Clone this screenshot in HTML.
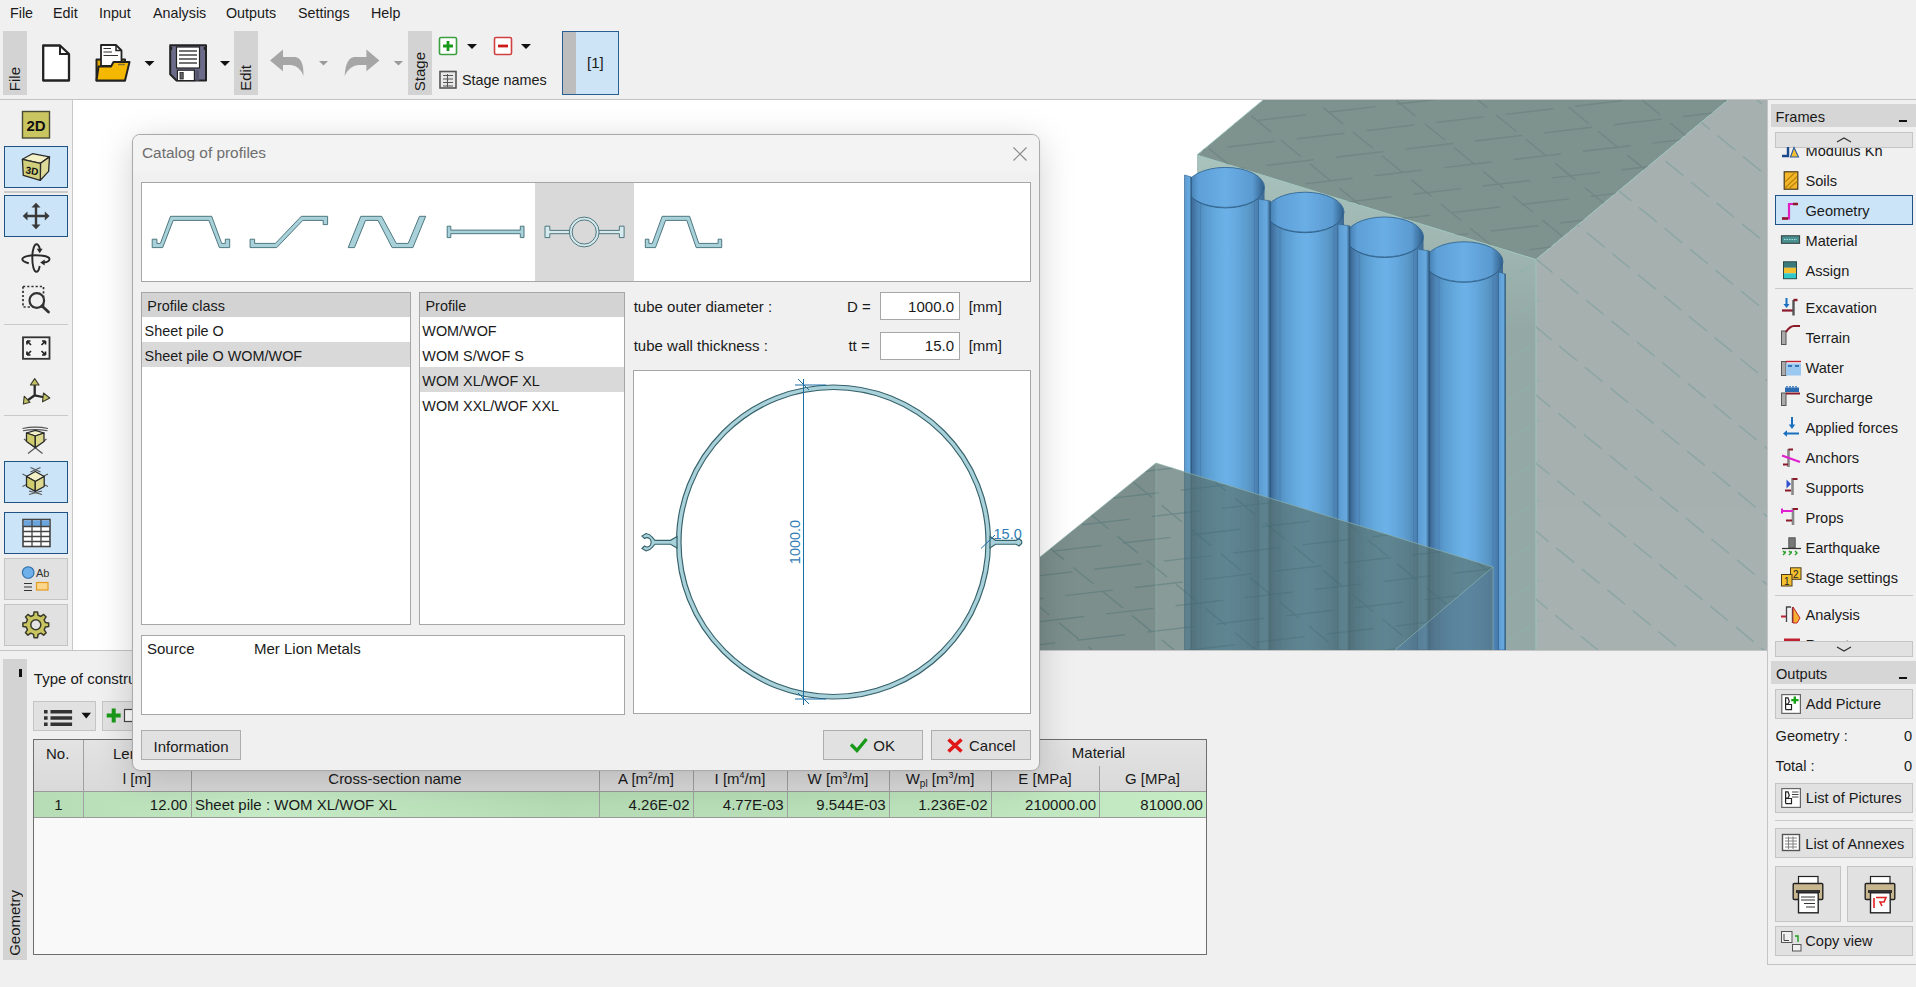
<!DOCTYPE html>
<html><head><meta charset="utf-8">
<style>
html,body{margin:0;padding:0;}
body{width:1916px;height:987px;overflow:hidden;position:relative;background:#f0f0f0;font-family:"Liberation Sans",sans-serif;font-size:15px;color:#1a1a1a;}
.a{position:absolute;}
.t{position:absolute;white-space:nowrap;line-height:15px;margin-top:-0.6px;}
.vl{position:absolute;background:#d3d3d3;}
.vl span{position:absolute;left:4px;bottom:4px;writing-mode:vertical-rl;transform:rotate(180deg);white-space:nowrap;font-size:15px;line-height:16px;color:#1a1a1a;}
.sel{position:absolute;background:#cce4f7;border:1px solid #1f5285;box-sizing:border-box;}
.gbtn{position:absolute;background:#e1e1e1;border:1px solid #c4c4c4;box-sizing:border-box;}
.sep{position:absolute;height:1px;background:#c9c9c9;}
sup{font-size:9px;vertical-align:6px;line-height:0;}
sub{font-size:10px;vertical-align:-3px;line-height:0;}
.arr{position:absolute;width:0;height:0;border-left:5px solid transparent;border-right:5px solid transparent;border-top:5px solid #111;}
</style></head><body>

<!-- MENU -->
<div class="t" style="left:10px;top:6.6px;font-size:14.3px;">File</div>
<div class="t" style="left:53px;top:6.6px;font-size:14.3px;">Edit</div>
<div class="t" style="left:99px;top:6.6px;font-size:14.3px;">Input</div>
<div class="t" style="left:153px;top:6.6px;font-size:14.3px;">Analysis</div>
<div class="t" style="left:226px;top:6.6px;font-size:14.3px;">Outputs</div>
<div class="t" style="left:298px;top:6.6px;font-size:14.3px;">Settings</div>
<div class="t" style="left:371px;top:6.6px;font-size:14.3px;">Help</div>

<!-- TOOLBAR -->

<div class="vl" style="left:3px;top:31px;width:24px;height:64px;"><span>File</span></div>
<div class="vl" style="left:234px;top:31px;width:24px;height:64px;"><span>Edit</span></div>
<div class="vl" style="left:408px;top:31px;width:24px;height:64px;"><span>Stage</span></div>
<svg class="a" style="left:0;top:30px;" width="640" height="68" viewBox="0 30 640 68">
 <!-- new file -->
 <path d="M43.2 45.5 H60 L69 54 V80.5 H43.2 Z" fill="#fff" stroke="#222" stroke-width="2.3" stroke-linejoin="round"/>
 <path d="M60 45.5 V54 H69" fill="none" stroke="#222" stroke-width="2"/>
 <!-- open folder -->
 <path d="M96.5 59.5 H103 V57 H110 V59.5 H125 V80.5 H96.5 Z" fill="#e0a800" stroke="#222" stroke-width="2" stroke-linejoin="round"/>
 <path d="M101 45 H116 L121.5 50.5 V66 H101 Z" fill="#fff" stroke="#222" stroke-width="1.8" stroke-linejoin="round"/>
 <path d="M116 45 V50.5 H121.5" fill="none" stroke="#222" stroke-width="1.5"/>
 <path d="M103.5 48.5 H111 M103.5 52 H112 M103.5 55.5 H118" stroke="#333" stroke-width="1.2"/>
 <path d="M96.5 80.5 L98.5 66.5 H111 L113.5 62 H129.5 L125 80.5 Z" fill="#f5b800" stroke="#222" stroke-width="2" stroke-linejoin="round"/>
 <path d="M118 64.5 H125" stroke="#8a7430" stroke-width="1.5"/>
 <path d="M144.5 61 H154.5 L149.5 66 Z" fill="#111"/>
 <!-- save -->
 <path d="M170.2 45.3 H206 V80.6 H176.5 L170.2 74.3 Z" fill="#6c6c8a" stroke="#222" stroke-width="2" stroke-linejoin="round"/>
 <rect x="176.5" y="47" width="23" height="21" fill="#fff" stroke="#222" stroke-width="1.2"/>
 <path d="M179 51 H197 M179 55 H197 M179 59 H197 M179 63 H197" stroke="#444" stroke-width="1.3"/>
 <rect x="177.4" y="70.2" width="17" height="10.4" fill="#fff" stroke="#222" stroke-width="1.2"/>
 <rect x="180" y="72.5" width="3.2" height="6.5" fill="#666" stroke="#222" stroke-width="0.8"/>
 <rect x="195.5" y="70.2" width="3.6" height="10.4" fill="#55556e"/>
 <path d="M171.5 47 V50 M204.5 47 V50" stroke="#222" stroke-width="1.4"/>
 <path d="M220 61 H230 L225 66 Z" fill="#111"/>
 <!-- undo -->
 <path d="M270 60.5 L283 49.6 V57 H295 Q304 58 303.4 76 Q300 66 291 65 H283 V71.3 Z" fill="#a6a6a6"/>
 <path d="M319 61 H328 L323.5 65.5 Z" fill="#9a9a9a"/>
 <!-- redo -->
 <path d="M379.4 60.5 L366.4 49.6 V57 H354.4 Q345.4 58 344.7 76 Q349 66 358.4 65 H366.4 V71.3 Z" fill="#a6a6a6"/>
 <path d="M393.8 61 H403 L398.4 65.5 Z" fill="#9a9a9a"/>
 <!-- stage add/remove -->
 <rect x="439.5" y="37.5" width="17" height="17" rx="1.5" fill="#fff" stroke="#3aa040" stroke-width="1.6"/>
 <path d="M448 41 V51 M443 46 H453" stroke="#1a9a1a" stroke-width="2.8"/>
 <path d="M467 44 H477 L472 49 Z" fill="#111"/>
 <rect x="494.5" y="37.5" width="17" height="17" rx="1.5" fill="#fff" stroke="#d04040" stroke-width="1.6"/>
 <path d="M498 46 H508" stroke="#cc1a1a" stroke-width="2.8"/>
 <path d="M521 44 H531 L526 49 Z" fill="#111"/>
 <!-- stage names icon -->
 <rect x="440" y="71.5" width="16" height="16.5" fill="#e8e8e8" stroke="#555" stroke-width="1.6"/>
 <path d="M443 75.5 H453 M443 79 H453 M443 82.5 H453 M443 86 H453 M447.5 74 V87" stroke="#555" stroke-width="1.1"/>
</svg>
<div class="t" style="left:462px;top:74px;font-size:14.4px;">Stage names</div>
<div class="a" style="left:562px;top:31px;width:57px;height:64px;background:#cde4f7;border:1px solid #2a5f94;box-sizing:border-box;"></div>
<div class="a" style="left:563px;top:32px;width:13px;height:62px;background:#bdbdbd;"></div>
<div class="t" style="left:587px;top:56px;">[1]</div>

<div class="a" style="left:0;top:99px;width:1916px;height:1px;background:#c4c4c4;"></div>

<!-- LEFT PANEL -->

<div class="sel" style="left:4px;top:146px;width:64px;height:42px;"></div>
<div class="sep" style="left:4px;top:191px;width:64px;height:2px;background:#cbcbcb;"></div>
<div class="sel" style="left:4px;top:195px;width:64px;height:42px;"></div>
<div class="sep" style="left:4px;top:324px;width:64px;"></div>
<div class="sep" style="left:4px;top:415px;width:64px;"></div>
<div class="sel" style="left:4px;top:461px;width:64px;height:42px;"></div>
<div class="sel" style="left:4px;top:512px;width:64px;height:42px;"></div>
<div class="gbtn" style="left:4px;top:558px;width:64px;height:42px;"></div>
<div class="gbtn" style="left:4px;top:604px;width:64px;height:42px;"></div>
<svg class="a" style="left:0;top:100px;" width="72" height="550" viewBox="0 100 72 550">
 <!-- 2D -->
 <rect x="22.5" y="111.5" width="27" height="26.5" fill="#c9c561" stroke="#4b4b35" stroke-width="1.4"/>
 <text x="36" y="131" font-family="Liberation Sans" font-weight="bold" font-size="15" text-anchor="middle" fill="#111">2D</text>
 <!-- 3D cube -->
 <path d="M22.4 159.3 L32.4 153.7 L49.5 156.9 L40.5 163.3 Z" fill="#f5f1c6" stroke="#2a2a2a" stroke-width="1.3" stroke-linejoin="round"/>
 <path d="M40.5 163.3 L49.5 156.9 L48.6 171.4 L40.3 180.3 Z" fill="#dedb98" stroke="#2a2a2a" stroke-width="1.3" stroke-linejoin="round"/>
 <path d="M22.4 159.3 L40.5 163.3 L40.3 180.3 L23.3 175.4 Z" fill="#d2cf7c" stroke="#2a2a2a" stroke-width="1.3" stroke-linejoin="round"/>
 <text x="0" y="0" transform="translate(31.6 174.3) rotate(10) skewX(2)" font-family="Liberation Sans" font-weight="bold" font-size="10" text-anchor="middle" fill="#111">3D</text>
 <!-- move arrows -->
 <g stroke="#3a3a3a" stroke-width="2.4" fill="#3a3a3a">
  <path d="M36 205 V227.5 M25 216 H47.5" fill="none"/>
 </g>
 <path d="M36 202.7 L31.5 207.5 H40.5 Z M36 229.3 L31.5 224.5 H40.5 Z M22.7 216 L27.5 211.5 V220.5 Z M49.6 216 L44.8 211.5 V220.5 Z" fill="#3a3a3a"/>
 <!-- rotate -->
 <path d="M39.7 266 C39 270.5 37.5 271.8 36.3 271.8 C33.8 271.8 32.3 265 32.3 258 C32.3 250 34.3 244.3 36.3 244.3 C38 244.3 39.3 246.5 40 249.5" fill="none" stroke="#2a2a2a" stroke-width="1.9"/>
 <path d="M36.7 248.8 L42.6 248.8 L39.7 253.3 Z" fill="#2a2a2a"/>
 <path d="M28.8 263.2 C24.5 262.2 22.3 260.8 22.3 259.3 C22.3 256.8 28 255.2 35.6 255.2 C44 255.2 49.5 257 49.5 259.3 C49.5 261.4 46.5 262.3 43.5 262.6" fill="none" stroke="#2a2a2a" stroke-width="1.9"/>
 <path d="M40.2 262.6 L44.8 259.5 L44.6 265.4 Z" fill="#2a2a2a"/>
 <!-- zoom -->
 <rect x="23" y="286.5" width="20.5" height="20.5" fill="none" stroke="#333" stroke-width="1.7" stroke-dasharray="2.2 2"/>
 <circle cx="36.8" cy="300.5" r="7.3" fill="#f0f0f0" stroke="#333" stroke-width="2.2"/>
 <path d="M42 306 L48.5 312" stroke="#333" stroke-width="2.8" stroke-linecap="round"/>
 <!-- fit -->
 <rect x="23" y="337.3" width="26.5" height="21.5" fill="#f4f4f4" stroke="#333" stroke-width="1.8"/>
 <path d="M27 341 L31 345 M27 341 V344.5 M27 341 H30.5 M45.5 341 L41.5 345 M45.5 341 V344.5 M45.5 341 H42 M27 355 L31 351 M27 355 V351.5 M27 355 H30.5 M45.5 355 L41.5 351 M45.5 355 V351.5 M45.5 355 H42" stroke="#222" stroke-width="1.7"/>
 <!-- axes -->
 <path d="M34.7 395.3 V383 M34.7 395.3 L26 401.5 M34.7 395.3 L45 397.5" stroke="#2a2a2a" stroke-width="2.3"/>
 <path d="M34.7 378.6 L30.4 385 H39 Z" fill="#c5c368" stroke="#3a3a2a" stroke-width="1.1" stroke-linejoin="round"/>
 <path d="M23.4 404 L24.2 396.2 L30 402.3 Z" fill="#c5c368" stroke="#3a3a2a" stroke-width="1.1" stroke-linejoin="round"/>
 <path d="M49.8 398 L43.5 393 L42.5 401.8 Z" fill="#c5c368" stroke="#3a3a2a" stroke-width="1.1" stroke-linejoin="round"/>
 <!-- view top -->
 <path d="M22.5 428.5 Q35.3 425.8 48 428.5 M23 430.8 Q35.3 428.5 47.5 430.8" stroke="#555" stroke-width="1.1" fill="none"/>
 <path d="M24 439 L42.5 453.5 M46.5 439 L28 453.5" stroke="#555" stroke-width="1.2" fill="none"/>
 <path d="M26.5 433 L35.3 430.3 L44 433 L35.3 436 Z" fill="#f3f0c8" stroke="#2a2a2a" stroke-width="1.3" stroke-linejoin="round"/>
 <path d="M26.5 433 L35.3 436 V447.5 L26.5 441.5 Z" fill="#cfcc6e" stroke="#2a2a2a" stroke-width="1.3" stroke-linejoin="round"/>
 <path d="M44 433 L35.3 436 V447.5 L44 441.5 Z" fill="#dcd98f" stroke="#2a2a2a" stroke-width="1.3" stroke-linejoin="round"/>
 <!-- view iso (selected) -->
 <path d="M22.5 474 L48 486.5 M48 474 L22.5 486.5 M30.5 467.5 L40.5 472 M40.5 467.5 L30.5 472 M29 491 L42 494.5 M42 491 L29 494.5" stroke="#555" stroke-width="1.1" fill="none"/>
 <path d="M26.5 476.5 L35.3 471.5 L44.2 476.5 L35.3 481.5 Z" fill="#f3f0c8" stroke="#2a2a2a" stroke-width="1.3" stroke-linejoin="round"/>
 <path d="M26.5 476.5 L35.3 481.5 V491.4 L26.5 486.5 Z" fill="#cfcc6e" stroke="#2a2a2a" stroke-width="1.3" stroke-linejoin="round"/>
 <path d="M44.2 476.5 L35.3 481.5 V491.4 L44.2 486.5 Z" fill="#dcd98f" stroke="#2a2a2a" stroke-width="1.3" stroke-linejoin="round"/>
 <!-- table -->
 <rect x="23" y="519.5" width="27" height="27" fill="#fff" stroke="#444" stroke-width="1.6"/>
 <rect x="23.8" y="520.3" width="25.4" height="6" fill="#6aa6dd"/>
 <path d="M23 526.5 H50 M23 531.5 H50 M23 536.5 H50 M23 541.5 H50 M32 519.5 V546.5 M41 519.5 V546.5" stroke="#444" stroke-width="1.3"/>
 <!-- Ab -->
 <circle cx="28.2" cy="572.5" r="5.8" fill="#6db0ea" stroke="#2a6aa5" stroke-width="1.1"/>
 <text x="36" y="577" font-family="Liberation Sans" font-size="11" fill="#333">Ab</text>
 <path d="M24 583.5 H32 M24 587 H32 M24 590.5 H32" stroke="#333" stroke-width="1.2"/>
 <rect x="36.5" y="582.5" width="11.5" height="7.5" fill="#fcd68a" stroke="#e39a20" stroke-width="1.2"/>
 <!-- gear -->
 <path d="M45.33 622.51 L48.68 623.07 L48.68 626.53 L45.33 627.09 L44.16 629.92 L46.13 632.69 L43.69 635.13 L40.92 633.16 L38.09 634.33 L37.53 637.68 L34.07 637.68 L33.51 634.33 L30.68 633.16 L27.91 635.13 L25.47 632.69 L27.44 629.92 L26.27 627.09 L22.92 626.53 L22.92 623.07 L26.27 622.51 L27.44 619.68 L25.47 616.91 L27.91 614.47 L30.68 616.44 L33.51 615.27 L34.07 611.92 L37.53 611.92 L38.09 615.27 L40.92 616.44 L43.69 614.47 L46.13 616.91 L44.16 619.68 Z" fill="#c9c561" stroke="#3a3a2a" stroke-width="1.5" stroke-linejoin="round"/>
 <circle cx="35.8" cy="624.8" r="5" fill="#e3e3e3" stroke="#3a3a2a" stroke-width="1.5"/>
</svg>


<!-- 3D VIEW -->
<div class="a" style="left:73px;top:100px;width:1694px;height:550px;background:#fff;overflow:hidden;" id="view3d"></div>

<svg class="a" style="left:73px;top:100px;" width="1694" height="550" viewBox="73 100 1694 550">
 <defs>
  <linearGradient id="pg" x1="0" x2="1" y1="0" y2="0">
   <stop offset="0" stop-color="#284c6c"/><stop offset="0.04" stop-color="#30597e"/><stop offset="0.08" stop-color="#416f9c"/>
   <stop offset="0.14" stop-color="#4e86b8"/><stop offset="0.25" stop-color="#5a9ccf"/><stop offset="0.40" stop-color="#66ace0"/>
   <stop offset="0.52" stop-color="#6cb1e8"/><stop offset="0.65" stop-color="#64a8de"/><stop offset="0.80" stop-color="#5a98c8"/>
   <stop offset="0.88" stop-color="#4f87b8"/><stop offset="0.94" stop-color="#4677a6"/><stop offset="1" stop-color="#3d6890"/>
  </linearGradient>
  <linearGradient id="pin" x1="0" x2="1" y1="0" y2="0">
   <stop offset="0" stop-color="#3a6e9e"/><stop offset="0.15" stop-color="#5d9fd6"/><stop offset="0.5" stop-color="#6aaee6"/>
   <stop offset="0.85" stop-color="#5a9ad0"/><stop offset="1" stop-color="#2f5d88"/>
  </linearGradient>
  <linearGradient id="ff" gradientUnits="userSpaceOnUse" x1="0" y1="160" x2="0" y2="330"><stop offset="0" stop-color="#a9c2bc"/><stop offset="1" stop-color="#94a9a5"/></linearGradient>
  <linearGradient id="pp" x1="0" x2="1"><stop offset="0" stop-color="#5a9ad0"/><stop offset="0.7" stop-color="#68aae0"/><stop offset="1" stop-color="#2a5478"/></linearGradient>
  <clipPath id="ctop"><path d="M1197 155 L1263 100 H1728 L1536 259.5 Z"/></clipPath>
  <clipPath id="cright"><path d="M1536 259.5 L1728 100 H1767 V650 H1536 Z"/></clipPath>
 </defs>
 <path d="M1197 155 L1263 100 H1728 L1536 259.5 Z" fill="#7e928f"/>
 <path d="M1536 259.5 L1728 100 H1767 V650 H1536 Z" fill="#a6b1b0"/>
 <path d="M1197 155 L1536 259.5 V650 H1197 Z" fill="url(#ff)"/>
<g stroke="#8fb3ab" stroke-width="1.4" fill="none" opacity="0.8"><path d="M1500 285 L1540 260" stroke-dasharray="14 8"/><path d="M1500 325 L1540 300" stroke-dasharray="14 8"/><path d="M1500 365 L1540 340" stroke-dasharray="14 8"/><path d="M1500 405 L1540 380" stroke-dasharray="14 8"/><path d="M1500 445 L1540 420" stroke-dasharray="14 8"/><path d="M1500 485 L1540 460" stroke-dasharray="14 8"/><path d="M1500 525 L1540 500" stroke-dasharray="14 8"/><path d="M1500 565 L1540 540" stroke-dasharray="14 8"/><path d="M1500 605 L1540 580" stroke-dasharray="14 8"/><path d="M1500 645 L1540 620" stroke-dasharray="14 8"/><path d="M1500 685 L1540 660" stroke-dasharray="14 8"/><path d="M1500 725 L1540 700" stroke-dasharray="14 8"/><path d="M1500 765 L1540 740" stroke-dasharray="14 8"/><path d="M1500 805 L1540 780" stroke-dasharray="14 8"/></g>
 <path d="M1197 155 L1263 100 M1197 155 L1536 259.5 L1728 100 M1536 259.5 V650" stroke="#9dc4bc" stroke-width="1" fill="none"/>
 <g clip-path="url(#ctop)" stroke="#687f7d" stroke-width="1.4" fill="none" opacity="0.55"><path d="M1150 64 L1800 -12.1" stroke-dasharray="48 22" stroke-dashoffset="8"/><path d="M1150 87 L1800 10.9" stroke-dasharray="48 22" stroke-dashoffset="39"/><path d="M1150 110 L1800 33.9" stroke-dasharray="48 22" stroke-dashoffset="0"/><path d="M1150 133 L1800 56.9" stroke-dasharray="48 22" stroke-dashoffset="31"/><path d="M1150 156 L1800 79.9" stroke-dasharray="48 22" stroke-dashoffset="62"/><path d="M1150 179 L1800 102.9" stroke-dasharray="48 22" stroke-dashoffset="23"/><path d="M1150 202 L1800 125.9" stroke-dasharray="48 22" stroke-dashoffset="54"/><path d="M1150 225 L1800 148.9" stroke-dasharray="48 22" stroke-dashoffset="15"/><path d="M1150 248 L1800 171.9" stroke-dasharray="48 22" stroke-dashoffset="46"/><path d="M1150 271 L1800 194.9" stroke-dasharray="48 22" stroke-dashoffset="7"/><path d="M1150 294 L1800 217.9" stroke-dasharray="48 22" stroke-dashoffset="38"/><path d="M1150 317 L1800 240.9" stroke-dasharray="48 22" stroke-dashoffset="69"/><path d="M1150 340 L1800 263.9" stroke-dasharray="48 22" stroke-dashoffset="30"/><path d="M1150 363 L1800 286.9" stroke-dasharray="48 22" stroke-dashoffset="61"/><path d="M1150 386 L1800 309.9" stroke-dasharray="48 22" stroke-dashoffset="22"/><path d="M1150 409 L1800 332.9" stroke-dasharray="48 22" stroke-dashoffset="53"/><path d="M1150 432 L1800 355.9" stroke-dasharray="48 22" stroke-dashoffset="14"/><path d="M1150 455 L1800 378.9" stroke-dasharray="48 22" stroke-dashoffset="45"/><path d="M1150 478 L1800 401.9" stroke-dasharray="48 22" stroke-dashoffset="6"/><path d="M1150 501 L1800 424.9" stroke-dasharray="48 22" stroke-dashoffset="37"/><path d="M1150 524 L1800 447.9" stroke-dasharray="48 22" stroke-dashoffset="68"/><path d="M1150 547 L1800 470.9" stroke-dasharray="48 22" stroke-dashoffset="29"/><path d="M1150 570 L1800 493.9" stroke-dasharray="48 22" stroke-dashoffset="60"/><path d="M1150 593 L1800 517.0" stroke-dasharray="48 22" stroke-dashoffset="21"/><path d="M1150 616 L1800 540.0" stroke-dasharray="48 22" stroke-dashoffset="52"/><path d="M1150 639 L1800 563.0" stroke-dasharray="48 22" stroke-dashoffset="13"/><path d="M1150 662 L1800 586.0" stroke-dasharray="48 22" stroke-dashoffset="44"/><path d="M1150 685 L1800 609.0" stroke-dasharray="48 22" stroke-dashoffset="5"/><path d="M1150 708 L1800 632.0" stroke-dasharray="48 22" stroke-dashoffset="36"/><path d="M1150 731 L1800 655.0" stroke-dasharray="48 22" stroke-dashoffset="67"/><path d="M1150 754 L1800 678.0" stroke-dasharray="48 22" stroke-dashoffset="28"/><path d="M1150 777 L1800 701.0" stroke-dasharray="48 22" stroke-dashoffset="59"/><path d="M494 100 l300 246" stroke-dasharray="26 12" stroke-dashoffset="10"/><path d="M576 100 l300 246" stroke-dasharray="26 12" stroke-dashoffset="23"/><path d="M658 100 l300 246" stroke-dasharray="26 12" stroke-dashoffset="36"/><path d="M740 100 l300 246" stroke-dasharray="26 12" stroke-dashoffset="11"/><path d="M822 100 l300 246" stroke-dasharray="26 12" stroke-dashoffset="24"/><path d="M904 100 l300 246" stroke-dasharray="26 12" stroke-dashoffset="37"/><path d="M986 100 l300 246" stroke-dasharray="26 12" stroke-dashoffset="12"/><path d="M1068 100 l300 246" stroke-dasharray="26 12" stroke-dashoffset="25"/><path d="M1150 100 l300 246" stroke-dasharray="26 12" stroke-dashoffset="0"/><path d="M1232 100 l300 246" stroke-dasharray="26 12" stroke-dashoffset="13"/><path d="M1314 100 l300 246" stroke-dasharray="26 12" stroke-dashoffset="26"/><path d="M1396 100 l300 246" stroke-dasharray="26 12" stroke-dashoffset="1"/><path d="M1478 100 l300 246" stroke-dasharray="26 12" stroke-dashoffset="14"/><path d="M1560 100 l300 246" stroke-dasharray="26 12" stroke-dashoffset="27"/><path d="M1642 100 l300 246" stroke-dasharray="26 12" stroke-dashoffset="2"/><path d="M1724 100 l300 246" stroke-dasharray="26 12" stroke-dashoffset="15"/><path d="M1806 100 l300 246" stroke-dasharray="26 12" stroke-dashoffset="28"/><path d="M1888 100 l300 246" stroke-dasharray="26 12" stroke-dashoffset="3"/><path d="M1970 100 l300 246" stroke-dasharray="26 12" stroke-dashoffset="16"/><path d="M2052 100 l300 246" stroke-dasharray="26 12" stroke-dashoffset="29"/></g>
 <g clip-path="url(#cright)" stroke="#8aa6a2" stroke-width="1.5" fill="none" opacity="0.9"><path d="M-286 -78 l900 738" stroke-dasharray="23 10" stroke-dashoffset="11"/><path d="M-203 -78 l900 738" stroke-dasharray="23 10" stroke-dashoffset="18"/><path d="M-120 -78 l900 738" stroke-dasharray="23 10" stroke-dashoffset="25"/><path d="M-37 -78 l900 738" stroke-dasharray="23 10" stroke-dashoffset="32"/><path d="M46 -78 l900 738" stroke-dasharray="23 10" stroke-dashoffset="6"/><path d="M129 -78 l900 738" stroke-dasharray="23 10" stroke-dashoffset="13"/><path d="M212 -78 l900 738" stroke-dasharray="23 10" stroke-dashoffset="20"/><path d="M295 -78 l900 738" stroke-dasharray="23 10" stroke-dashoffset="27"/><path d="M378 -78 l900 738" stroke-dasharray="23 10" stroke-dashoffset="1"/><path d="M461 -78 l900 738" stroke-dasharray="23 10" stroke-dashoffset="8"/><path d="M544 -78 l900 738" stroke-dasharray="23 10" stroke-dashoffset="15"/><path d="M627 -78 l900 738" stroke-dasharray="23 10" stroke-dashoffset="22"/><path d="M710 -78 l900 738" stroke-dasharray="23 10" stroke-dashoffset="29"/><path d="M793 -78 l900 738" stroke-dasharray="23 10" stroke-dashoffset="3"/><path d="M876 -78 l900 738" stroke-dasharray="23 10" stroke-dashoffset="10"/><path d="M959 -78 l900 738" stroke-dasharray="23 10" stroke-dashoffset="17"/><path d="M1042 -78 l900 738" stroke-dasharray="23 10" stroke-dashoffset="24"/><path d="M1125 -78 l900 738" stroke-dasharray="23 10" stroke-dashoffset="31"/><path d="M1208 -78 l900 738" stroke-dasharray="23 10" stroke-dashoffset="5"/><path d="M1291 -78 l900 738" stroke-dasharray="23 10" stroke-dashoffset="12"/><path d="M1374 -78 l900 738" stroke-dasharray="23 10" stroke-dashoffset="19"/><path d="M1457 -78 l900 738" stroke-dasharray="23 10" stroke-dashoffset="26"/><path d="M1540 -78 l900 738" stroke-dasharray="23 10" stroke-dashoffset="0"/><path d="M1623 -78 l900 738" stroke-dasharray="23 10" stroke-dashoffset="7"/><path d="M1706 -78 l900 738" stroke-dasharray="23 10" stroke-dashoffset="14"/><path d="M1789 -78 l900 738" stroke-dasharray="23 10" stroke-dashoffset="21"/><path d="M1872 -78 l900 738" stroke-dasharray="23 10" stroke-dashoffset="28"/><path d="M1955 -78 l900 738" stroke-dasharray="23 10" stroke-dashoffset="2"/><path d="M2038 -78 l900 738" stroke-dasharray="23 10" stroke-dashoffset="9"/><path d="M2121 -78 l900 738" stroke-dasharray="23 10" stroke-dashoffset="16"/><path d="M2204 -78 l900 738" stroke-dasharray="23 10" stroke-dashoffset="23"/><path d="M2287 -78 l900 738" stroke-dasharray="23 10" stroke-dashoffset="30"/></g>
 <ellipse cx="1225.5" cy="187.4" rx="39" ry="20" fill="url(#pin)" stroke="#3b6f9c" stroke-width="1"/>
 <path d="M1186.5 187.4 A39 20 0 0 0 1264.5 187.4 V650 H1186.5 Z" fill="url(#pg)"/>
 <path d="M1187.5 188.4 A38 19.5 0 0 0 1263.5 188.4" fill="none" stroke="#2d5c86" stroke-width="0.9"/>
 <path d="M1192.5 199.4 V650 M1200.5 204.4 V650 M1254.5 202.4 V650 M1260.5 196.4 V650" stroke="#3f73a3" stroke-width="0.7" opacity="0.6"/>
 <ellipse cx="1305.0" cy="212.2" rx="39" ry="20" fill="url(#pin)" stroke="#3b6f9c" stroke-width="1"/>
 <path d="M1266.0 212.2 A39 20 0 0 0 1344.0 212.2 V650 H1266.0 Z" fill="url(#pg)"/>
 <path d="M1267.0 213.2 A38 19.5 0 0 0 1343.0 213.2" fill="none" stroke="#2d5c86" stroke-width="0.9"/>
 <path d="M1272.0 224.2 V650 M1280.0 229.2 V650 M1334.0 227.2 V650 M1340.0 221.2 V650" stroke="#3f73a3" stroke-width="0.7" opacity="0.6"/>
 <ellipse cx="1384.5" cy="237.0" rx="39" ry="20" fill="url(#pin)" stroke="#3b6f9c" stroke-width="1"/>
 <path d="M1345.5 237.0 A39 20 0 0 0 1423.5 237.0 V650 H1345.5 Z" fill="url(#pg)"/>
 <path d="M1346.5 238.0 A38 19.5 0 0 0 1422.5 238.0" fill="none" stroke="#2d5c86" stroke-width="0.9"/>
 <path d="M1351.5 249.0 V650 M1359.5 254.0 V650 M1413.5 252.0 V650 M1419.5 246.0 V650" stroke="#3f73a3" stroke-width="0.7" opacity="0.6"/>
 <ellipse cx="1464.0" cy="261.8" rx="39" ry="20" fill="url(#pin)" stroke="#3b6f9c" stroke-width="1"/>
 <path d="M1425.0 261.8 A39 20 0 0 0 1503.0 261.8 V650 H1425.0 Z" fill="url(#pg)"/>
 <path d="M1426.0 262.8 A38 19.5 0 0 0 1502.0 262.8" fill="none" stroke="#2d5c86" stroke-width="0.9"/>
 <path d="M1431.0 273.8 V650 M1439.0 278.8 V650 M1493.0 276.8 V650 M1499.0 270.8 V650" stroke="#3f73a3" stroke-width="0.7" opacity="0.6"/>
 <path d="M1184.5 175 L1191.5 177 V650 H1184.5 Z" fill="url(#pp)" stroke="#2d5c86" stroke-width="0.6"/>
 <path d="M1258.5 199 L1270.5 201 V650 H1258.5 Z" fill="url(#pp)" stroke="#2d5c86" stroke-width="0.6"/>
 <path d="M1338 224 L1350 226 V650 H1338 Z" fill="url(#pp)" stroke="#2d5c86" stroke-width="0.6"/>
 <path d="M1417.5 249 L1429.5 251 V650 H1417.5 Z" fill="url(#pp)" stroke="#2d5c86" stroke-width="0.6"/>
 <path d="M1498.5 272 L1505.5 274 V650 H1498.5 Z" fill="url(#pp)" stroke="#2d5c86" stroke-width="0.6"/>
 <!-- lower block -->
 <path d="M960 622 L1156 463 L1493 567 L1395 650 H960 Z" fill="rgb(92,116,114)" fill-opacity="0.72"/>
 <path d="M960 622 L1156 463 V650 H960 Z" fill="rgb(80,100,95)" fill-opacity="0.2"/>
 <path d="M1395 650 L1493 567 V650 Z" fill="rgb(85,115,128)" fill-opacity="0.7"/>
<clipPath id="clow"><path d="M960 622 L1156 463 L1493 567 L1395 650 H960 Z"/></clipPath>
 <g clip-path="url(#clow)" stroke="#3f6a70" stroke-width="1.4" fill="none" opacity="0.35"><path d="M960 424 L1500 360.8" stroke-dasharray="48 22" stroke-dashoffset="12"/><path d="M960 447 L1500 383.8" stroke-dasharray="48 22" stroke-dashoffset="41"/><path d="M960 470 L1500 406.8" stroke-dasharray="48 22" stroke-dashoffset="0"/><path d="M960 493 L1500 429.8" stroke-dasharray="48 22" stroke-dashoffset="29"/><path d="M960 516 L1500 452.8" stroke-dasharray="48 22" stroke-dashoffset="58"/><path d="M960 539 L1500 475.8" stroke-dasharray="48 22" stroke-dashoffset="17"/><path d="M960 562 L1500 498.8" stroke-dasharray="48 22" stroke-dashoffset="46"/><path d="M960 585 L1500 521.8" stroke-dasharray="48 22" stroke-dashoffset="5"/><path d="M960 608 L1500 544.8" stroke-dasharray="48 22" stroke-dashoffset="34"/><path d="M960 631 L1500 567.8" stroke-dasharray="48 22" stroke-dashoffset="63"/><path d="M960 654 L1500 590.8" stroke-dasharray="48 22" stroke-dashoffset="22"/><path d="M960 677 L1500 613.8" stroke-dasharray="48 22" stroke-dashoffset="51"/><path d="M960 700 L1500 636.8" stroke-dasharray="48 22" stroke-dashoffset="10"/><path d="M960 723 L1500 659.8" stroke-dasharray="48 22" stroke-dashoffset="39"/><path d="M344 440 l300 246" stroke-dasharray="26 12" stroke-dashoffset="26"/><path d="M426 440 l300 246" stroke-dasharray="26 12" stroke-dashoffset="37"/><path d="M508 440 l300 246" stroke-dasharray="26 12" stroke-dashoffset="10"/><path d="M590 440 l300 246" stroke-dasharray="26 12" stroke-dashoffset="21"/><path d="M672 440 l300 246" stroke-dasharray="26 12" stroke-dashoffset="32"/><path d="M754 440 l300 246" stroke-dasharray="26 12" stroke-dashoffset="5"/><path d="M836 440 l300 246" stroke-dasharray="26 12" stroke-dashoffset="16"/><path d="M918 440 l300 246" stroke-dasharray="26 12" stroke-dashoffset="27"/><path d="M1000 440 l300 246" stroke-dasharray="26 12" stroke-dashoffset="0"/><path d="M1082 440 l300 246" stroke-dasharray="26 12" stroke-dashoffset="11"/><path d="M1164 440 l300 246" stroke-dasharray="26 12" stroke-dashoffset="22"/><path d="M1246 440 l300 246" stroke-dasharray="26 12" stroke-dashoffset="33"/><path d="M1328 440 l300 246" stroke-dasharray="26 12" stroke-dashoffset="6"/><path d="M1410 440 l300 246" stroke-dasharray="26 12" stroke-dashoffset="17"/><path d="M1492 440 l300 246" stroke-dasharray="26 12" stroke-dashoffset="28"/><path d="M1574 440 l300 246" stroke-dasharray="26 12" stroke-dashoffset="1"/><path d="M1656 440 l300 246" stroke-dasharray="26 12" stroke-dashoffset="12"/><path d="M1738 440 l300 246" stroke-dasharray="26 12" stroke-dashoffset="23"/></g>
 <path d="M960 622 L1156 463 L1493 567 L1395 650 M1156 463 V650 M1493 567 V650" stroke="#8fb5ae" stroke-width="0.8" fill="none" opacity="0.8"/>
</svg>

<div class="a" style="left:72px;top:100px;width:1px;height:550px;background:#c9c9c9;"></div>
<div class="a" style="left:0;top:650px;width:1767px;height:1px;background:#c4c4c4;"></div>

<!-- RIGHT PANEL -->

<div class="a" style="left:1767px;top:100px;width:1px;height:864px;background:#c4c4c4;"></div>
<div class="a" style="left:1767px;top:964px;width:149px;height:1px;background:#c4c4c4;"></div>
<div class="a" style="left:1771px;top:104px;width:145px;height:23px;background:#d6d6d6;"></div>
<div class="t" style="left:1775.5px;top:109px;font-size:14.6px;margin-top:0.9px;">Frames</div>
<div class="a" style="left:1899px;top:120px;width:8px;height:2px;background:#111;"></div>
<div class="a" style="left:1768px;top:147px;width:148px;height:494px;overflow:hidden;">
 <div class="t" style="left:37.5px;top:-4.3px;font-size:14.6px;margin-top:0.9px;">Modulus Kh</div>
 <div class="sel" style="left:7px;top:48px;width:138px;height:30px;"></div>
 <div class="t" style="left:37.5px;top:26.0px;font-size:14.6px;margin-top:0.9px;">Soils</div>
 <div class="t" style="left:37.5px;top:56.0px;font-size:14.6px;margin-top:0.9px;">Geometry</div>
 <div class="t" style="left:37.5px;top:86.0px;font-size:14.6px;margin-top:0.9px;">Material</div>
 <div class="t" style="left:37.5px;top:116.0px;font-size:14.6px;margin-top:0.9px;">Assign</div>
 <div class="a" style="left:7px;top:141px;width:138px;height:1px;background:#c9c9c9;"></div>
 <div class="t" style="left:37.5px;top:153.2px;font-size:14.6px;margin-top:0.9px;">Excavation</div>
 <div class="t" style="left:37.5px;top:183.2px;font-size:14.6px;margin-top:0.9px;">Terrain</div>
 <div class="t" style="left:37.5px;top:213.2px;font-size:14.6px;margin-top:0.9px;">Water</div>
 <div class="t" style="left:37.5px;top:243.2px;font-size:14.6px;margin-top:0.9px;">Surcharge</div>
 <div class="t" style="left:37.5px;top:273.2px;font-size:14.6px;margin-top:0.9px;">Applied forces</div>
 <div class="t" style="left:37.5px;top:303.2px;font-size:14.6px;margin-top:0.9px;">Anchors</div>
 <div class="t" style="left:37.5px;top:333.2px;font-size:14.6px;margin-top:0.9px;">Supports</div>
 <div class="t" style="left:37.5px;top:363.2px;font-size:14.6px;margin-top:0.9px;">Props</div>
 <div class="t" style="left:37.5px;top:393.2px;font-size:14.6px;margin-top:0.9px;">Earthquake</div>
 <div class="t" style="left:37.5px;top:423.2px;font-size:14.6px;margin-top:0.9px;">Stage settings</div>
 <div class="a" style="left:7px;top:448px;width:138px;height:1px;background:#c9c9c9;"></div>
 <div class="t" style="left:37.5px;top:459.7px;font-size:14.6px;margin-top:0.9px;">Analysis</div>
 <div class="t" style="left:37.5px;top:489.7px;font-size:14.6px;margin-top:0.9px;">Reports</div>
</div>
<div class="gbtn" style="left:1775px;top:132px;width:138px;height:16px;background:#e1e1e1;"></div>
<svg class="a" style="left:1836px;top:136px;" width="16" height="8"><path d="M1 6 L8 2 L15 6" fill="none" stroke="#333" stroke-width="1.3"/></svg>
<div class="gbtn" style="left:1775px;top:641px;width:138px;height:16px;background:#e1e1e1;"></div>
<svg class="a" style="left:1836px;top:645px;" width="16" height="8"><path d="M1 2 L8 6 L15 2" fill="none" stroke="#333" stroke-width="1.3"/></svg>

<div class="a" style="left:1771px;top:661px;width:145px;height:23px;background:#d6d6d6;"></div>
<div class="t" style="left:1776px;top:666px;font-size:14.6px;margin-top:0.9px;">Outputs</div>
<div class="a" style="left:1899px;top:677px;width:8px;height:2px;background:#111;"></div>
<div class="gbtn" style="left:1775px;top:689px;width:138px;height:30px;"></div>
<div class="t" style="left:1805.8px;top:696.3px;font-size:14.6px;margin-top:0.9px;">Add Picture</div>
<div class="t" style="left:1775.6px;top:727.9px;font-size:14.6px;margin-top:0.9px;">Geometry :</div>
<div class="t" style="left:1904px;top:727.9px;font-size:14.6px;margin-top:0.9px;">0</div>
<div class="t" style="left:1775.6px;top:758px;font-size:14.6px;margin-top:0.9px;">Total :</div>
<div class="t" style="left:1904px;top:758px;font-size:14.6px;margin-top:0.9px;">0</div>
<div class="gbtn" style="left:1775px;top:783px;width:138px;height:30px;"></div>
<div class="t" style="left:1805.8px;top:790.3px;font-size:14.6px;margin-top:0.9px;">List of Pictures</div>
<div class="a" style="left:1775px;top:820px;width:138px;height:1px;background:#c9c9c9;"></div>
<div class="gbtn" style="left:1775px;top:828px;width:138px;height:30px;"></div>
<div class="t" style="left:1805.3px;top:836px;font-size:14.6px;margin-top:0.9px;">List of Annexes</div>
<div class="gbtn" style="left:1775px;top:866px;width:66px;height:56px;"></div>
<div class="gbtn" style="left:1847px;top:866px;width:66px;height:56px;"></div>
<div class="gbtn" style="left:1775px;top:926px;width:138px;height:30px;"></div>
<div class="t" style="left:1805.3px;top:933.4px;font-size:14.6px;margin-top:0.9px;">Copy view</div>
<svg class="a" style="left:1768px;top:100px;" width="148" height="870" viewBox="1768 100 148 870">
 <!-- Modulus Kh icon (clipped) -->
 <path d="M1782 156 H1788 V147" fill="none" stroke="#1a4a8a" stroke-width="2.4"/>
 <path d="M1790.5 157 L1794 147.5 L1798.5 157 Z" fill="#f5c030" stroke="#2a5aa0" stroke-width="1.1"/>
 <path d="M1784 638.5 H1800 V641 H1784 Z" fill="#c02030"/>
 <!-- Soils -->
 <rect x="1784.2" y="171.8" width="13.6" height="17.4" fill="#f5b62a" stroke="#4a3a1a" stroke-width="1.2"/>
 <path d="M1785 182 L1795 172.5 M1785 188 L1797 176.5 M1789 188.5 L1797.5 181" stroke="#b8860b" stroke-width="1.2"/>
 <!-- Geometry -->
 <path d="M1782 218.5 H1789 V204 H1798" fill="none" stroke="#e020c0" stroke-width="2.2"/>
 <path d="M1782 218.5 H1788 M1793 204 H1798" stroke="#8b1a2a" stroke-width="2.4"/>
 <!-- Material -->
 <rect x="1781.5" y="235.8" width="18" height="7.5" fill="#4a9090" stroke="#3a4a4a" stroke-width="1.2"/>
 <path d="M1784 239.5 H1797" stroke="#a0e0e0" stroke-width="1.2" stroke-dasharray="1.5 1"/>
 <!-- Assign -->
 <rect x="1783.5" y="261.8" width="13" height="6" fill="#3a7a7a"/>
 <rect x="1783.5" y="267.8" width="13" height="5.5" fill="#f5c030"/>
 <rect x="1783.5" y="273.3" width="13" height="5.4" fill="#30c8c8"/>
 <rect x="1783.5" y="261.8" width="13" height="16.9" fill="none" stroke="#2a4a4a" stroke-width="1"/>
 <!-- Excavation -->
 <path d="M1786.5 298 V306" stroke="#1a70c0" stroke-width="2"/>
 <path d="M1783.5 304 L1786.5 308 L1789.5 304 Z" fill="#1a70c0"/>
 <path d="M1782 310.5 H1793" stroke="#8b1a2a" stroke-width="2.2"/>
 <path d="M1793.5 300 V315.5" stroke="#555" stroke-width="2.4"/>
 <path d="M1793.5 300 H1797.5" stroke="#8b1a2a" stroke-width="2.4"/>
 <!-- Terrain -->
 <rect x="1781.5" y="331" width="4.5" height="13.5" fill="#aaa" stroke="#555" stroke-width="1"/>
 <path d="M1786 332 Q1790 326 1794 326 H1800" fill="none" stroke="#8b1a2a" stroke-width="2.2"/>
 <!-- Water -->
 <rect x="1781.5" y="361.5" width="4.5" height="14" fill="#aaa" stroke="#555" stroke-width="1"/>
 <rect x="1786" y="363.5" width="15" height="12" fill="#9ac8f0"/>
 <path d="M1786 361.5 H1801" stroke="#c02030" stroke-width="1.4"/>
 <path d="M1788 366 H1792 M1795 366 H1799" stroke="#1a5aa0" stroke-width="1.6"/>
 <!-- Surcharge -->
 <rect x="1781.5" y="393" width="4.5" height="12.5" fill="#aaa" stroke="#555" stroke-width="1"/>
 <path d="M1786 393.5 H1800" stroke="#8b1a2a" stroke-width="2"/>
 <path d="M1785 387.5 H1799 V392 H1785 Z" fill="#2a6ab0"/>
 <path d="M1787 387.5 V386 M1790 387.5 V386 M1793 387.5 V386 M1796 387.5 V386" stroke="#2a6ab0" stroke-width="1.5"/>
 <!-- Applied forces -->
 <path d="M1792 417 V427" stroke="#1a70c0" stroke-width="2"/>
 <path d="M1788.8 424.5 L1792 429 L1795.2 424.5 Z" fill="#1a70c0"/>
 <path d="M1786 433.5 H1799" stroke="#1a70c0" stroke-width="2"/>
 <path d="M1783 433.5 L1787 430.3 V436.7 Z" fill="#1a70c0"/>
 <!-- Anchors -->
 <path d="M1788.5 449 V467" stroke="#888" stroke-width="2.6"/>
 <path d="M1788.5 449.5 H1793 M1783 464.5 H1788" stroke="#8b1a2a" stroke-width="2"/>
 <path d="M1782 455.5 L1800 462" stroke="#e020d0" stroke-width="2.2"/>
 <!-- Supports -->
 <path d="M1792.5 478 V495" stroke="#888" stroke-width="2.6"/>
 <path d="M1792.5 479 H1797.5 M1785 490.5 H1791" stroke="#8b1a2a" stroke-width="2"/>
 <path d="M1786.5 479.5 L1791 484 L1786.5 488.5 Z" fill="#3050d0"/>
 <!-- Props -->
 <path d="M1793 508 V525" stroke="#888" stroke-width="2.6"/>
 <path d="M1793 509 H1798 M1786 520.5 H1792" stroke="#8b1a2a" stroke-width="2"/>
 <path d="M1782 511 H1793 M1782 508.5 V513.5" stroke="#e020d0" stroke-width="2"/>
 <!-- Earthquake -->
 <rect x="1788.8" y="537.8" width="6.4" height="10" fill="#777" stroke="#444" stroke-width="0.8"/>
 <path d="M1782 548.5 H1801" stroke="#333" stroke-width="1.2"/>
 <path d="M1783 551 L1785 553 L1783 555 M1789 551 L1791 553 L1789 555 M1795 551 L1797 553 L1795 555 M1784 552 H1786 M1790 552 H1792" stroke="#2aa02a" stroke-width="1.4" fill="none"/>
 <!-- Stage settings -->
 <rect x="1790.5" y="567.8" width="10.5" height="11.5" fill="#f5c030" stroke="#4a3a1a" stroke-width="1"/>
 <text x="1795.7" y="577.5" font-family="Liberation Sans" font-size="10" text-anchor="middle" fill="#222">2</text>
 <rect x="1781.5" y="574.5" width="10.5" height="11.5" fill="#f5c030" stroke="#4a3a1a" stroke-width="1"/>
 <text x="1786.7" y="584.5" font-family="Liberation Sans" font-size="10" text-anchor="middle" fill="#222">1</text>
 <!-- Analysis -->
 <path d="M1781 616.5 H1786" stroke="#c02030" stroke-width="2"/>
 <path d="M1786.5 622 V607 H1791 M1792.5 607 V623" stroke="#444" stroke-width="1.3" fill="none"/>
 <path d="M1793 607 L1800 618 L1797 623 H1793 Z" fill="#f5b030" stroke="#c02030" stroke-width="1"/>
 <!-- Add picture icon -->
 <rect x="1781.8" y="694.6" width="18.6" height="18.8" fill="#fff" stroke="#666" stroke-width="1.2"/>
 <path d="M1785.6 709.6 V697.8 H1788 L1789.3 701.5 L1788 704 H1785.6 M1785.6 704.5 H1791.5 V709.6 H1785.6" fill="none" stroke="#222" stroke-width="1.2"/>
 <path d="M1794.8 696.5 V703.8 M1791.2 700.1 H1798.5" stroke="#15a015" stroke-width="2.4"/>
 <!-- List of pictures icon -->
 <rect x="1781.8" y="788.6" width="18.6" height="18.8" fill="#fff" stroke="#666" stroke-width="1.2"/>
 <path d="M1785.6 803.6 V791.8 H1788 L1789.3 795.5 L1788 798 H1785.6 M1785.6 798.5 H1791.5 V803.6 H1785.6" fill="none" stroke="#222" stroke-width="1.2"/>
 <path d="M1792 792 H1798.5 M1792 794.5 H1798.5 M1792 797 H1798.5" stroke="#444" stroke-width="1"/>
 <!-- List of annexes icon -->
 <rect x="1782.5" y="834.5" width="17" height="16" fill="#fff" stroke="#555" stroke-width="1.4"/>
 <path d="M1785 838 H1797 M1785 841 H1797 M1785 844 H1797 M1785 847 H1797 M1788.5 836.5 V849 M1793 836.5 V849" stroke="#777" stroke-width="0.9"/>
 <!-- printers -->
 <g id="pr1">
  <rect x="1798.5" y="876.5" width="19.5" height="8" fill="#fff" stroke="#222" stroke-width="1.2"/>
  <rect x="1793.2" y="883.5" width="29.6" height="16" rx="1" fill="#c8b78e" stroke="#222" stroke-width="1.4"/>
  <rect x="1796" y="890" width="24" height="3" fill="#333"/>
  <rect x="1798.5" y="892.8" width="19.7" height="20" fill="#fff" stroke="#222" stroke-width="1.4"/>
 </g>
 <path d="M1801 897 H1815 M1801 900 H1815 M1804 903.5 H1815 M1806 907 H1815" stroke="#333" stroke-width="1"/>
 <g>
  <rect x="1870.5" y="876.5" width="19.5" height="8" fill="#fff" stroke="#222" stroke-width="1.2"/>
  <rect x="1865.2" y="883.5" width="29.6" height="16" rx="1" fill="#c8b78e" stroke="#222" stroke-width="1.4"/>
  <rect x="1868" y="890" width="24" height="3" fill="#333"/>
  <rect x="1870.5" y="892.8" width="19.7" height="20" fill="#fff" stroke="#222" stroke-width="1.4"/>
 </g>
 <path d="M1874 898 V908 M1876 897.5 H1886 L1884 902 H1880 L1882 906" stroke="#e02020" stroke-width="1.6" fill="none"/>
 <!-- copy view icon -->
 <rect x="1781.5" y="931.5" width="10.5" height="11" fill="#f0f0f0" stroke="#555" stroke-width="1"/>
 <path d="M1784 934 V940.5 H1789" stroke="#444" stroke-width="1" fill="none"/>
 <path d="M1795 936 H1798 V942" stroke="#1aa01a" stroke-width="1.4" fill="none"/>
 <rect x="1792.5" y="944.5" width="8.5" height="6.5" fill="#f0f0f0" stroke="#555" stroke-width="1"/>
</svg>


<!-- BOTTOM PANEL -->

<div class="vl" style="left:3px;top:659px;width:24px;height:301px;"><span>Geometry</span></div>
<div class="a" style="left:19px;top:669px;width:3px;height:8px;background:#111;"></div>
<div class="t" style="left:33.8px;top:672.0px;">Type of construction</div>
<div class="gbtn" style="left:33px;top:701px;width:63px;height:30px;"></div>
<svg class="a" style="left:40px;top:705px;" width="56" height="22" viewBox="40 705 56 22">
 <path d="M44 710 h3.6 v3.5 h-3.6 Z M44 716.3 h3.6 v3.5 h-3.6 Z M44 722.5 h3.6 v3.5 h-3.6 Z M50.5 710 h21.6 v3.5 h-21.6 Z M50.5 716.3 h21.6 v3.5 h-21.6 Z M50.5 722.5 h21.6 v3.5 h-21.6 Z" fill="#333"/>
 <path d="M81.5 712.7 H91 L86.25 718.4 Z" fill="#111"/>
</svg>
<div class="gbtn" style="left:102px;top:701px;width:70px;height:30px;"></div>
<svg class="a" style="left:104px;top:705px;" width="40" height="22" viewBox="104 705 40 22">
 <path d="M113.7 708.5 V722.5 M106.7 715.5 H120.7" stroke="#1a9a1a" stroke-width="4"/>
 <rect x="124.5" y="709.5" width="10" height="12" fill="#fff" stroke="#444" stroke-width="1.2"/>
</svg>
<!-- table -->
<div class="a" style="left:33px;top:739px;width:1174px;height:216px;background:#f9f9f9;border:1px solid #6e6e6e;box-sizing:border-box;"></div>
<div class="a" style="left:34px;top:740px;width:1172px;height:51px;background:linear-gradient(#e3e3e3,#d9d9d9);"></div>
<div class="a" style="left:34px;top:791px;width:1172px;height:1px;background:#9a9a9a;"></div>
<div class="a" style="left:34px;top:792px;width:1172px;height:25px;background:linear-gradient(90deg,#b5dcb5 0%,#c6ebc6 20%,#b5dcb5 45%,#b9e0b9 70%,#c6ecc6 100%);"></div>
<div class="a" style="left:34px;top:817px;width:1172px;height:1px;background:#9a9a9a;"></div>
<div class="a" style="left:83px;top:740px;width:1px;height:77px;background:#a0a0a0;"></div>
<div class="a" style="left:191px;top:740px;width:1px;height:77px;background:#a0a0a0;"></div>
<div class="a" style="left:599px;top:740px;width:1px;height:77px;background:#a0a0a0;"></div>
<div class="a" style="left:693px;top:740px;width:1px;height:77px;background:#a0a0a0;"></div>
<div class="a" style="left:787px;top:740px;width:1px;height:77px;background:#a0a0a0;"></div>
<div class="a" style="left:889px;top:740px;width:1px;height:77px;background:#a0a0a0;"></div>
<div class="a" style="left:991px;top:740px;width:1px;height:77px;background:#a0a0a0;"></div>
<div class="a" style="left:1099px;top:766px;width:1px;height:51px;background:#a0a0a0;"></div>
<div class="t" style="left:46px;top:746.1px;">No.</div>
<div class="t" style="left:113px;top:746.1px;">Length</div>
<div class="t" style="left:83px;width:108px;text-align:center;top:771.6px;">l [m]</div>
<div class="t" style="left:191px;width:408px;text-align:center;top:771.3px;">Cross-section name</div>
<div class="t" style="left:599px;width:94px;text-align:center;top:771.8px;">A [m<sup>2</sup>/m]</div>
<div class="t" style="left:693px;width:94px;text-align:center;top:771.8px;">I [m<sup>4</sup>/m]</div>
<div class="t" style="left:787px;width:102px;text-align:center;top:771.8px;">W [m<sup>3</sup>/m]</div>
<div class="t" style="left:889px;width:102px;text-align:center;top:771.8px;">W<sub>pl</sub> [m<sup>3</sup>/m]</div>
<div class="t" style="left:991px;width:108px;text-align:center;top:771.8px;">E [MPa]</div>
<div class="t" style="left:1099px;width:107px;text-align:center;top:771.8px;">G [MPa]</div>
<div class="t" style="left:991px;width:215px;text-align:center;top:746.0px;">Material</div>
<div class="t" style="left:34px;width:49px;text-align:center;top:797.8px;">1</div>
<div class="t" style="left:-12.6px;width:200px;text-align:right;top:797.8px;">12.00</div>
<div class="t" style="left:489.5px;width:200px;text-align:right;top:797.8px;">4.26E-02</div>
<div class="t" style="left:583.7px;width:200px;text-align:right;top:797.8px;">4.77E-03</div>
<div class="t" style="left:685.6px;width:200px;text-align:right;top:797.8px;">9.544E-03</div>
<div class="t" style="left:787.5px;width:200px;text-align:right;top:797.8px;">1.236E-02</div>
<div class="t" style="left:896.0px;width:200px;text-align:right;top:797.8px;">210000.00</div>
<div class="t" style="left:1002.9px;width:200px;text-align:right;top:797.8px;">81000.00</div>
<div class="t" style="left:195px;top:797.8px;">Sheet pile : WOM XL/WOF XL</div>


<!-- DIALOG -->

<div class="a" style="left:132px;top:134px;width:908px;height:637px;background:#f0f0f0;border:1px solid #aaaaaa;box-sizing:border-box;border-radius:8px;box-shadow:0 8px 36px rgba(0,0,0,0.18),0 0 3px rgba(0,0,0,0.05);"></div>
<div class="a" style="left:133px;top:135px;width:906px;height:40px;background:linear-gradient(#f3f3f3 85%,#f0f0f0);border-radius:7px 7px 0 0;"></div>
<div class="t" style="left:142px;top:146.0px;color:#6e6e6e;font-size:15.4px;">Catalog of profiles</div>
<svg class="a" style="left:1010px;top:144px;" width="20" height="20"><path d="M3.5 3.5 L16.5 16.5 M16.5 3.5 L3.5 16.5" stroke="#8a8a8a" stroke-width="1.2"/></svg>
<!-- icon strip -->
<div class="a" style="left:141px;top:182px;width:890px;height:100px;background:#fff;border:1px solid #a6a6a6;box-sizing:border-box;"></div>
<div class="a" style="left:535px;top:183px;width:98.5px;height:98px;background:#d9d9d9;"></div>
<svg class="a" style="left:141px;top:182px;" width="890" height="100" viewBox="141 182 890 100">
 <g fill="#a9d1da" stroke="#3f6b74" stroke-width="0.9" stroke-linejoin="miter">
 <path d="M152.2 239.2 H156.9 V243.4 H160.4 L170.5 216.3 H211.7 L221.7 243.4 H225.3 V239.2 H229.7 V247.6 H219.4 L208.9 220.4 H173.2 L162.7 247.6 H152.2 Z"/>
 <path d="M250.1 239.2 H254.6 V243.4 H275.4 L301.3 216.3 H327.6 V224.6 H323.2 V220.4 H302.8 L276.7 247.6 H250.1 Z"/>
 <path d="M348.2 247.6 L360.8 216.3 H381.6 L396.3 243.4 H408.2 L419.5 216.3 H425.7 L412.9 247.6 H392.1 L378 220.4 H365.5 L354.5 247.6 Z"/>
 <path d="M447.2 226.2 H450.8 V230.1 H520.3 V226.2 H524 V237.6 H520.3 V233.7 H450.8 V237.6 H447.2 Z"/>
 <path d="M645.3 239.2 H648.9 V243.4 H652.3 L662.2 216.3 H689.6 L698.8 243.4 H718.1 V239.2 H721.7 V247.6 H696.2 L686.8 220.4 H665.6 L655.5 247.6 H645.3 Z"/>
 </g>
 <g fill="#d7ebef" stroke="#3f6b74" stroke-width="0.9">
 <path d="M545 226.2 H549.8 V230.4 H569.8 V233.7 H549.8 V237.6 H545 Z"/>
 <path d="M619.4 226.2 H624.1 V237.6 H619.4 V233.7 H598.6 V230.4 H619.4 Z"/>
 <path fill-rule="evenodd" d="M569.3 232 A14.9 14.9 0 1 0 599.1 232 A14.9 14.9 0 1 0 569.3 232 Z M572.1 232 A12.1 12.1 0 1 1 596.3 232 A12.1 12.1 0 1 1 572.1 232 Z"/>
 </g>
</svg>
<!-- lists -->
<div class="a" style="left:141px;top:292px;width:270px;height:333px;background:#fff;border:1px solid #a6a6a6;box-sizing:border-box;"></div>
<div class="a" style="left:142px;top:293px;width:268px;height:24px;background:#d3d3d3;"></div>
<div class="a" style="left:142px;top:342px;width:268px;height:25px;background:#d9d9d9;"></div>
<div class="a" style="left:419px;top:292px;width:206px;height:333px;background:#fff;border:1px solid #a6a6a6;box-sizing:border-box;"></div>
<div class="a" style="left:420px;top:293px;width:204px;height:24px;background:#d3d3d3;"></div>
<div class="a" style="left:420px;top:367px;width:204px;height:25px;background:#d9d9d9;"></div>
<div class="t" style="left:147.3px;top:298.7px;font-size:14.4px;margin-top:0.4px;">Profile class</div>
<div class="t" style="left:144.6px;top:323.7px;font-size:14.4px;margin-top:0.4px;">Sheet pile O</div>
<div class="t" style="left:144.6px;top:348.7px;font-size:14.4px;margin-top:0.4px;">Sheet pile O WOM/WOF</div>
<div class="t" style="left:425.5px;top:298.7px;font-size:14.4px;margin-top:0.4px;">Profile</div>
<div class="t" style="left:422.3px;top:323.7px;font-size:14.4px;margin-top:0.4px;">WOM/WOF</div>
<div class="t" style="left:422.3px;top:348.7px;font-size:14.4px;margin-top:0.4px;">WOM S/WOF S</div>
<div class="t" style="left:422.3px;top:373.7px;font-size:14.4px;margin-top:0.4px;">WOM XL/WOF XL</div>
<div class="t" style="left:422.3px;top:398.7px;font-size:14.4px;margin-top:0.4px;">WOM XXL/WOF XXL</div>
<div class="t" style="left:633.7px;top:299.2px;">tube outer diameter :</div>
<div class="t" style="left:847px;top:299.2px;">D =</div>
<div class="t" style="left:633.7px;top:338.8px;">tube wall thickness :</div>
<div class="t" style="left:848.4px;top:338.8px;">tt =</div>
<div class="a" style="left:880px;top:292px;width:80px;height:28px;background:#fff;border:1px solid #a6a6a6;box-sizing:border-box;"></div>
<div class="a" style="left:880px;top:332px;width:80px;height:28px;background:#fff;border:1px solid #a6a6a6;box-sizing:border-box;"></div>
<div class="t" style="left:754px;width:200px;text-align:right;top:299.2px;">1000.0</div>
<div class="t" style="left:754px;width:200px;text-align:right;top:338.8px;">15.0</div>
<div class="t" style="left:968.7px;top:299.2px;">[mm]</div>
<div class="t" style="left:968.7px;top:338.8px;">[mm]</div>
<div class="a" style="left:633px;top:370px;width:398px;height:344px;background:#fff;border:1px solid #a6a6a6;box-sizing:border-box;"></div>
<svg class="a" style="left:634px;top:371px;" width="396" height="342" viewBox="634 371 396 342">
 <path fill-rule="evenodd" fill="#a9d1da" stroke="#35616b" stroke-width="1.15" d="M676.5 542 A157 157 0 1 0 990.5 542 A157 157 0 1 0 676.5 542 Z M681 542 A152.5 152.5 0 1 1 986 542 A152.5 152.5 0 1 1 681 542 Z"/>
 <g fill="#a9d1da" stroke="#35616b" stroke-width="1.15">
  <path d="M677 536.5 L670.5 540.3 H655 L652 537 Q650 534 646 533.5 L642 536 L644.5 538.5 Q648 536.5 650.5 539.5 Q652 542 650.5 545 Q648 548.5 644.5 546 L642 548.5 L646 551 Q650 550.5 652 547.5 L655 544.2 H670.5 L677 548 Z"/>
  <path d="M990 536.5 L995.6 540.3 H1016 L1019 538.5 L1021.7 541 V543.5 L1019 546 L1016 544.2 H995.6 L990 548 Z"/>
 </g>
 <g stroke="#1b6da6" stroke-width="1" fill="none">
  <path d="M803.5 379 V705"/>
  <path d="M795 385 H826 M798 379 L809 390"/>
  <path d="M795 699 H826 M798 693 L809 704"/>
  <path d="M981 548.5 L995 535"/>
 </g>
 <text x="0" y="0" transform="translate(800 542) rotate(-90)" font-family="Liberation Sans" font-size="14.5" text-anchor="middle" fill="#2f7cb4">1000.0</text>
 <text x="993.5" y="538.7" font-family="Liberation Sans" font-size="14.5" fill="#2f7cb4">15.0</text>
</svg>
<!-- source -->
<div class="a" style="left:141px;top:635px;width:484px;height:80px;background:#fff;border:1px solid #a6a6a6;box-sizing:border-box;"></div>
<div class="t" style="left:147px;top:641.3px;">Source</div>
<div class="t" style="left:254px;top:641.3px;">Mer Lion Metals</div>
<div class="gbtn" style="left:141px;top:730px;width:100px;height:30px;background:#e1e1e1;border-color:#adadad;"></div>
<div class="t" style="left:141px;width:100px;text-align:center;top:739.3px;">Information</div>
<div class="gbtn" style="left:823px;top:730px;width:100px;height:30px;background:#e1e1e1;border-color:#adadad;"></div>
<div class="gbtn" style="left:931px;top:730px;width:100px;height:30px;background:#e1e1e1;border-color:#adadad;"></div>
<svg class="a" style="left:845px;top:734px;" width="180" height="22" viewBox="845 734 180 22">
 <path d="M851 744.5 L857 750.5 L866.5 739" fill="none" stroke="#1a9a1a" stroke-width="3.4"/>
 <path d="M948.5 739.5 L961.5 751.5 M961.5 739.5 L948.5 751.5" stroke="#e01818" stroke-width="3.6"/>
</svg>
<div class="t" style="left:873.3px;top:738.3px;">OK</div>
<div class="t" style="left:969px;top:738.8px;">Cancel</div>


</body></html>
